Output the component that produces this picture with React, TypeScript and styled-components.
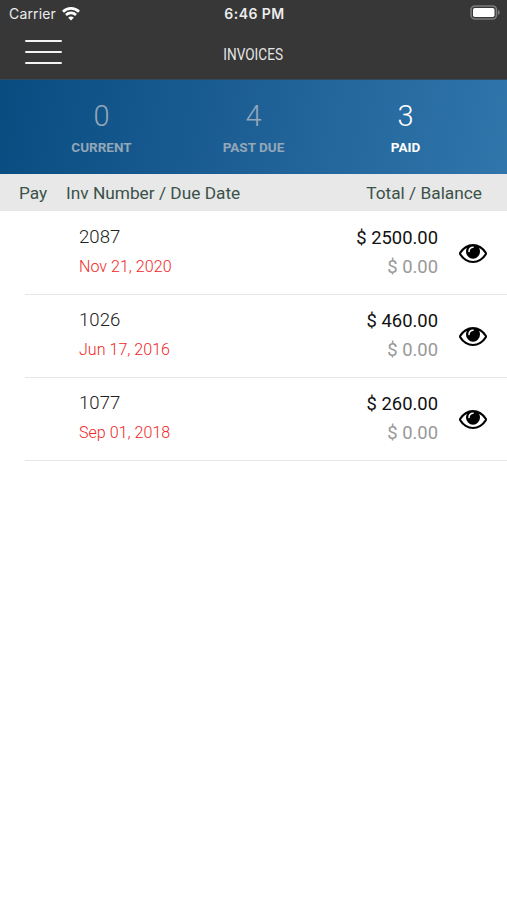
import React from "react";
import styled, { createGlobalStyle } from "styled-components";

const GlobalStyle = createGlobalStyle`
  * { box-sizing: border-box; }
  body { margin: 0; background: #fff; font-family: Roboto, sans-serif; }
`;

const Screen = styled.main`
  width: 507px;
  height: 900px;
  overflow: hidden;
  background: #fff;
`;

const StatusBar = styled.div`
  display: grid;
  grid-template-columns: 1fr auto 1fr;
  align-items: center;
  height: 27px;
  padding: 0 7px 0 9px;
  background: #373737;
  color: #ececec;
  font: 400 14px/27px Inter, sans-serif;
`;

const Carrier = styled.div`
  display: flex;
  align-items: center;
  gap: 6px;
  letter-spacing: 0.15px;
`;

const Clock = styled.div`
  font-weight: 600;
  letter-spacing: 0.45px;
`;

const BatterySlot = styled.div`
  display: flex;
  justify-content: flex-end;
  padding-bottom: 1px;
`;

const NavBar = styled.header`
  display: grid;
  grid-template-columns: 1fr auto 1fr;
  align-items: center;
  height: 53px;
  padding: 0 25px;
  background: #373737;
  border-bottom: 1px solid #31495c;
`;

const MenuButton = styled.button`
  display: flex;
  flex-direction: column;
  gap: 8.4px;
  width: 37px;
  margin: 0;
  padding: 0 0 2px;
  border: 0;
  background: none;
`;

const MenuLine = styled.span`
  height: 2.3px;
  width: 37px;
  border-radius: 1px;
  background: #f2f2f2;
`;

const Title = styled.h1`
  margin: 0;
  padding-top: 3px;
  color: #e6e6e6;
  font-size: 16px;
  font-weight: 400;
  line-height: 20px;
  transform: scaleX(0.85);
`;

const Tabs = styled.nav`
  display: grid;
  grid-template-columns: repeat(3, 152px);
  justify-content: center;
  height: 94px;
  padding-top: 19px;
  background: linear-gradient(100deg, #084c80 0%, #1c5e94 45%, #3076ab 100%);
`;

const Tab = styled.div<{ $active?: boolean }>`
  display: flex;
  flex-direction: column;
  align-items: center;
  color: ${(p) => (p.$active ? "#fff" : "#93a7b8")};
`;

const Count = styled.span`
  font-size: 29px;
  font-weight: 300;
  line-height: 34px;
`;

const TabLabel = styled.span`
  margin-top: 5px;
  font-size: 13.5px;
  font-weight: 700;
  line-height: 18px;
`;

const ListHead = styled.div`
  display: flex;
  align-items: center;
  height: 37px;
  padding: 0 25px 0 19px;
  background: #e8e8e8;
  color: #3b5249;
  font-size: 17.3px;
`;

const PayHead = styled.span`
  width: 47px;
`;

const TotalHead = styled.span`
  margin-left: auto;
`;

const List = styled.section`
  padding-top: 1px;
`;

const Row = styled.article`
  display: flex;
  align-items: center;
  height: 83px;
  margin-left: 25px;
  padding: 0 20px 3px 54px;
  border-bottom: 1px solid #e6e6e6;
`;

const Details = styled.div`
  display: flex;
  flex-direction: column;
  flex: 1;
`;

const Amounts = styled(Details)`
  align-items: flex-end;
  margin-right: 21px;
  font-size: 18.4px;
`;

const InvoiceNo = styled.span`
  color: #222;
  font-size: 18.6px;
  font-weight: 300;
  line-height: 29px;
`;

const DueDate = styled.span`
  color: #f02828;
  font-size: 16.1px;
  font-weight: 300;
  line-height: 29px;
`;

const Total = styled.span`
  color: #111;
  line-height: 29px;
`;

const Balance = styled.span`
  color: #999;
  line-height: 29px;
`;

const WifiIcon = () => (
  <svg width="18" height="14" viewBox="0 0 18 14" fill="none" stroke="#fff" strokeWidth="2.7">
    <path d="M1 4.7a11.5 11.5 0 0 1 16 0M4 8a7.1 7.1 0 0 1 10 0" />
    <path d="M9 13.6 6.2 10.8a3.9 3.9 0 0 1 5.6 0Z" fill="#fff" stroke="none" />
  </svg>
);

const BatteryIcon = () => (
  <svg width="30" height="16" viewBox="0 0 30 16">
    <rect x="1" y="1" width="25.5" height="13" rx="4" fill="none" stroke="#7c7c7c" strokeWidth="1.6" />
    <rect x="3" y="3" width="21.5" height="9" rx="1.8" fill="#fff" />
    <path d="M28 5v5c2.3-.8 2.3-4.2 0-5Z" fill="#7c7c7c" />
  </svg>
);

const EyeGlyph = styled.svg`
  margin-top: 4px;
`;

const EyeIcon = () => (
  <EyeGlyph width="28" height="19" viewBox="0 384 1792 1152" preserveAspectRatio="none" fill="#000">
    <path d="M1664 960q-152-236-381-353 61 104 61 225 0 185-131.5 316.5t-316.5 131.5-316.5-131.5-131.5-316.5q0-121 61-225-229 117-381 353 133 205 333.5 326.5t434.5 121.5 434.5-121.5 333.5-326.5zm-720-384q0-20-14-34t-34-14q-125 0-214.5 89.5t-89.5 214.5q0 20 14 34t34 14 34-14 14-34q0-86 61-147t147-61q20 0 34-14t14-34zm848 384q0 34-20 69-140 230-376.5 368.5t-499.5 138.5-499.5-139-376.5-368q-20-35-20-69t20-69q140-229 376.5-368t499.5-139 499.5 139 376.5 368q20 35 20 69z" />
  </EyeGlyph>
);

const tabs = [
  { count: 0, label: "CURRENT" },
  { count: 4, label: "PAST DUE" },
  { count: 3, label: "PAID", active: true },
];

const invoices = [
  { no: "2087", due: "Nov 21, 2020", total: "$ 2500.00", balance: "$ 0.00" },
  { no: "1026", due: "Jun 17, 2016", total: "$ 460.00", balance: "$ 0.00" },
  { no: "1077", due: "Sep 01, 2018", total: "$ 260.00", balance: "$ 0.00" },
];

export default function App() {
  return (
    <Screen>
      <GlobalStyle />
      <StatusBar>
        <Carrier>
          <span>Carrier</span>
          <WifiIcon />
        </Carrier>
        <Clock>6:46 PM</Clock>
        <BatterySlot>
          <BatteryIcon />
        </BatterySlot>
      </StatusBar>
      <NavBar>
        <MenuButton aria-label="Menu">
          <MenuLine />
          <MenuLine />
          <MenuLine />
        </MenuButton>
        <Title>INVOICES</Title>
      </NavBar>
      <Tabs>
        {tabs.map((t) => (
          <Tab key={t.label} $active={t.active}>
            <Count>{t.count}</Count>
            <TabLabel>{t.label}</TabLabel>
          </Tab>
        ))}
      </Tabs>
      <ListHead>
        <PayHead>Pay</PayHead>
        <span>Inv Number / Due Date</span>
        <TotalHead>Total / Balance</TotalHead>
      </ListHead>
      <List>
        {invoices.map((i) => (
          <Row key={i.no}>
            <Details>
              <InvoiceNo>{i.no}</InvoiceNo>
              <DueDate>{i.due}</DueDate>
            </Details>
            <Amounts>
              <Total>{i.total}</Total>
              <Balance>{i.balance}</Balance>
            </Amounts>
            <EyeIcon />
          </Row>
        ))}
      </List>
    </Screen>
  );
}
